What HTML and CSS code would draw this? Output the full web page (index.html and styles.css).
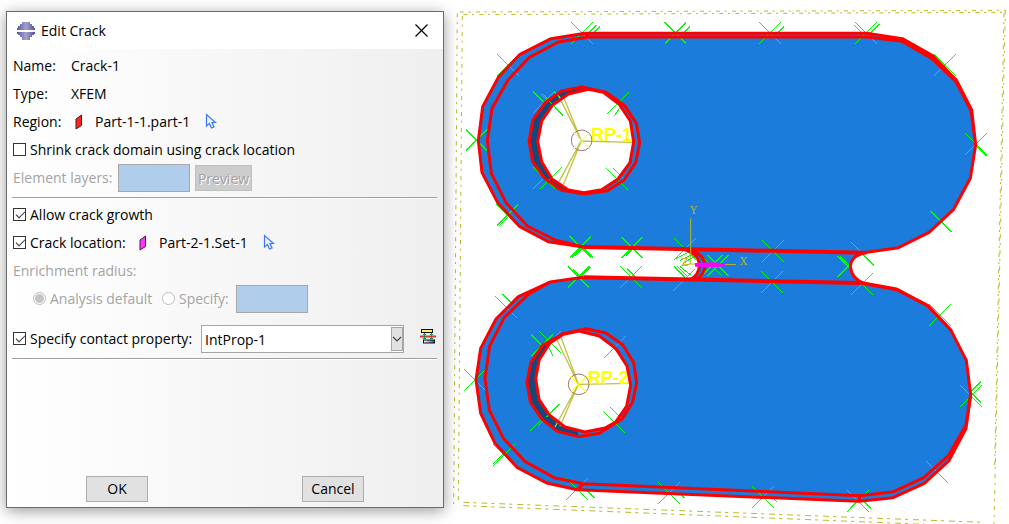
FILE: index.html
```html
<!DOCTYPE html>
<html lang="en">
<head>
<meta charset="utf-8">
<title>Edit Crack</title>
<link rel="stylesheet" href="styles.css">
</head>
<body>
<svg class="defs" aria-hidden="true">
  <defs>
    <linearGradient id="gem" x1="0" x2="1"><stop offset="0" stop-color="#5a5aa6"/><stop offset=".5" stop-color="#a3a3c8"/><stop offset="1" stop-color="#5050a0"/></linearGradient>
    <linearGradient id="steel" x1="0" x2="1"><stop offset="0" stop-color="#fff"/><stop offset="1" stop-color="#3c4ba8"/></linearGradient>
    <symbol id="pick" viewBox="0 0 12 16"><path d="M1.500 1.500V13L4.500 10.500L6.500 15L9 14L7 9.500H10.500Z" fill="#eef3ff" stroke="#3b78ff" stroke-width="1.200"/></symbol>
    <path id="b" d="M-32-32L32 32"/>
    <path id="s" d="M32-32L-32 32"/>
    <path id="x" d="M-32-32L32 32M32-32L-32 32"/>
  </defs>
</svg>
<div class="screen">
  <form class="dialog" aria-labelledby="dialog-title">
    <header class="titlebar">
      <svg class="app-icon" viewBox="0 0 18 18" shape-rendering="crispEdges"><path d="M5 0H13V2H15V4H17V6H18V8H0V6H1V4H3V2H5ZM0 10H18V12H17V13H15V15H13V18H5V15H3V13H1V12H0Z" fill="url(#gem)"/></svg>
      <h1 id="dialog-title">Edit Crack</h1>
      <button class="close" type="button" aria-label="Close"><svg viewBox="0 0 13 13"><path d="M.5.5L12.500 12.500M12.500.5L.5 12.500" stroke="#000" stroke-width="1.200"/></svg></button>
    </header>
    <div class="content">
      <div class="row"><span class="key">Name:</span><span>Crack-1</span></div>
      <div class="row"><span class="key">Type:</span><span>XFEM</span></div>
      <div class="row">
        <span class="key">Region:</span>
        <svg class="swatch" viewBox="0 0 8 16"><path d="M1 5L6.500 1V11.500L1 15Z" fill="#f22" stroke="#422" stroke-width="1"/></svg>
        <span class="target">Part-1-1.part-1</span>
        <button class="pick" type="button" aria-label="Pick region"><svg><use href="#pick"/></svg></button>
      </div>
      <div class="row"><label class="option"><input type="checkbox"> Shrink crack domain using crack location</label></div>
      <div class="row disabled">
        <label class="layers" for="layers">Element layers:</label>
        <input class="field" id="layers" type="text" disabled>
        <button class="preview" type="button" disabled>Preview</button>
      </div>
      <hr>
      <div class="row"><label class="option"><input type="checkbox" checked> Allow crack growth</label></div>
      <div class="row">
        <label class="option location"><input type="checkbox" checked> Crack location:</label>
        <svg class="swatch" viewBox="0 0 8 16"><path d="M1 5L6.500 1V11.500L1 15Z" fill="#f3f" stroke="#424" stroke-width="1"/></svg>
        <span class="target">Part-2-1.Set-1</span>
        <button class="pick" type="button" aria-label="Pick crack location"><svg><use href="#pick"/></svg></button>
      </div>
      <div class="row disabled">Enrichment radius:</div>
      <div class="row radius disabled">
        <label class="option analysis"><input type="radio" name="radius" checked disabled> Analysis default</label>
        <label class="option specify"><input type="radio" name="radius" disabled> Specify:</label>
        <input class="field" type="text" aria-label="Enrichment radius" disabled>
      </div>
      <div class="row contact">
        <label class="option property"><input type="checkbox" checked> Specify contact property:</label>
        <span class="combo">
          <select aria-label="Contact property"><option>IntProp-1</option></select>
          <svg class="arrow" viewBox="0 0 12 24"><rect x=".5" y=".5" width="11" height="23" fill="#e1e1e1" stroke="#a5a5a5"/><path d="M2 10L6 14L10 10" fill="none" stroke="#444" stroke-width="1.200"/></svg>
        </span>
        <button class="create" type="button" aria-label="Create interaction property"><svg viewBox="0 0 16 16"><rect x="1.500" y="1.500" width="11" height="3" fill="#ffe98a" stroke="#111"/><path d="M0 8.500H16" stroke="#d43a3a" stroke-width="2"/><path d="M4.500 5V11M11.500 5V11M3 6.500H6M10 6.500H13M3 10.500H6M10 10.500H13" stroke="#0a9a4a"/><rect x="3.500" y="12" width="11" height="3" fill="url(#steel)" stroke="#111"/></svg></button>
      </div>
      <hr>
      <footer class="actions"><button type="submit">OK</button><button type="button">Cancel</button></footer>
    </div>
  </form>

  <main class="viewport">
    <svg class="model" viewBox="0 0 1677 1572" preserveAspectRatio="xMinYMin meet" role="img" aria-label="Specimen model">
      <defs>
        <clipPath id="hole1"><path d="M415 268L460 277L508 313L541 363L548 425L540 488L504 537L455 569L402 578L355 570L306 537L275 485L263 425L275 363L308 315L355 282Z"/></clipPath>
        <clipPath id="hole2"><path d="M387 207L448 222L498 260L531 312L542 370L530 432L497 480L465 498L405 510L345 495L297 458L267 412L257 350L268 292L300 243L340 217Z"/></clipPath>
      </defs>

      <!-- datum planes -->
      <g class="datum">
        <path d="M30 36L1666 31M40 44L1664 37"/>
        <path d="M22 40L11 1516M37 48L25 1504"/>
        <path class="wide" d="M40 1507L1600 1567M40 1517L1500 1576"/>
        <path d="M1666 31L1632 1572M1662 40L1634 1400"/>
      </g>

      <!-- constraint marks behind the solid -->
      <g class="mark">
        <use href="#s" x="408" y="107"/><use href="#s" x="418" y="111"/><use href="#s" x="688" y="111"/>
        <use href="#s" x="183" y="202"/><use href="#s" x="180" y="645"/>
        <use href="#x" x="398" y="741"/><use href="#s" x="407" y="735"/><use href="#s" x="560" y="735"/>
        <use href="#s" x="970" y="111"/><use href="#s" x="1256" y="105"/><use href="#b" x="1244" y="107"/>
        <use href="#b" x="1577" y="436"/><use href="#s" x="1487" y="193"/><use href="#b" x="1240" y="764"/>
        <use href="#x" x="389" y="834"/><use href="#b" x="401" y="840"/><use href="#b" x="564" y="838"/>
        <use href="#b" x="190" y="915"/><use href="#s" x="162" y="1359"/>
        <use href="#b" x="402" y="1462"/><use href="#b" x="671" y="1462"/>
        <use href="#b" x="948" y="1473"/><use href="#x" x="1231" y="1494"/>
        <use href="#x" x="1561" y="1176"/><use href="#s" x="1470" y="945"/>
      </g>

      <!-- solid faces -->
      <path class="face" d="M405 100L303 116L210 163L146 230L98 320L85 422L96 518L143 608L208 679L295 725L400 741L706 750Q745 760 748 795Q748 824 722 838L400 832L300 846L205 890L138 957L92 1045L78 1140L92 1240L135 1330L201 1402L290 1449L382 1469L1227 1503L1329 1493L1423 1450L1497 1382L1548 1286L1562 1184L1549 1081L1503 991L1434 918L1340 869L1240 851Q1203 838 1201 800Q1205 764 1240 758L1345 743L1437 697L1511 628L1561 535L1577 434L1565 330L1519 240L1450 170L1357 116L1250 101Z"/>

      <!-- constraint marks in front -->
      <g class="mark">
        <use href="#x" x="396" y="99"/><use href="#x" x="676" y="99"/><use href="#x" x="960" y="99"/><use href="#x" x="1248" y="99"/>
        <use href="#x" x="174" y="195"/><use href="#x" x="80" y="420"/><use href="#x" x="172" y="645"/>
        <use href="#x" x="391" y="741"/><use href="#x" x="546" y="743"/><use href="#x" x="705" y="747"/><use href="#x" x="969" y="753"/><use href="#b" x="1235" y="758"/>
        <use href="#x" x="1485" y="195"/><use href="#x" x="1578" y="432"/><use href="#b" x="1473" y="665"/>
        <use href="#b" x="281" y="306"/><use href="#b" x="306" y="315"/><use href="#s" x="282" y="306"/>
        <use href="#s" x="504" y="309"/>
        <use href="#x" x="282" y="534"/><use href="#s" x="303" y="534"/><use href="#b" x="501" y="537"/>
        <use href="#x" x="386" y="831"/><use href="#x" x="543" y="831"/><use href="#s" x="702" y="840"/>
        <use href="#x" x="966" y="846"/><use href="#x" x="1236" y="852"/><use href="#x" x="1470" y="945"/>
        <use href="#b" x="168" y="921"/><use href="#x" x="75" y="1140"/><use href="#x" x="162" y="1365"/>
        <use href="#b" x="276" y="1036"/><use href="#x" x="300" y="1026"/><use href="#s" x="276" y="1036"/>
        <use href="#s" x="495" y="1041"/>
        <use href="#s" x="273" y="1260"/><use href="#x" x="296" y="1246"/><use href="#b" x="492" y="1266"/>
        <use href="#x" x="381" y="1467"/><use href="#x" x="657" y="1479"/><use href="#x" x="939" y="1491"/><use href="#x" x="1224" y="1503"/>
        <use href="#b" x="1461" y="1416"/><use href="#x" x="1563" y="1188"/>
        <use href="#x" x="785" y="797"/><use href="#x" x="804" y="797"/>
      </g>
      <g class="mark">
        <path d="M720 755L678 776M728 762L690 782M735 768L700 790M672 800L705 832M680 797L712 829M690 800L722 825M712 755L745 780"/>
        <path d="M1162 768L1202 808M1170 770L1202 800M1162 832L1204 790"/>
      </g>

      <!-- model edges -->
      <g class="edge">
        <path d="M405 100L303 116L210 163L146 230L98 320L85 422L96 518L143 608L208 679L295 725L400 741"/>
        <path d="M415 111L325 126L238 172L174 240L126 325L112 422L124 520L168 608L232 678L315 720L400 741"/>
        <path d="M405 100L415 111H1250L1357 124L1446 176L1517 244L1563 332L1577 434M405 100H1250L1357 116L1450 168L1519 240L1565 330L1577 434L1561 535L1511 628L1437 697L1345 743L1240 758"/>
        <path class="heavy" d="M400 741L1240 758M400 832L1230 849"/>
        <path d="M1250 758Q1203 764 1201 800Q1205 838 1245 851"/>
        <path d="M720 750Q765 765 765 797Q763 825 738 838M706 750Q745 760 748 795Q748 824 722 838"/>
        <path d="M400 832L300 846L205 890L138 957L92 1045L78 1140L92 1240L135 1330L201 1402L290 1449L382 1469L1227 1504L1329 1493L1423 1450L1497 1382L1548 1286L1562 1184L1549 1081L1503 991L1434 918L1340 869L1230 849"/>
        <path d="M300 846L235 883L163 952L119 1038L105 1135L118 1230L160 1315L226 1385L312 1433L400 1451L1230 1487L1331 1475L1421 1433L1495 1367L1548 1275L1562 1184M382 1469L400 1451M1230 1487L1227 1504"/>
        <path d="M1240 849L1340 867L1434 917L1505 993"/>
      </g>

      <!-- upper pin hole -->
      <g>
        <path class="wall" d="M402 582L333 570L283 534L248 485L237 422L249 360L285 308L335 273L395 261Z"/>
        <path class="void" d="M415 268L460 277L508 313L541 363L551 425L540 488L504 537L455 569L402 578L355 570L306 537L275 485L263 425L275 363L308 315L355 282Z"/>
        <g class="mark"><path d="M313 275L338 300M280 283L338 347M323 330L340 347M504 309L472 341M515 317L493 347M325 512L290 548M335 502L303 534M469 505L501 537M490 505L522 537"/></g>
        <path class="spoke" d="M394 422L327 290M394 422L342 295M394 422L327 545M394 422L340 554M394 423L548 427"/>
        <circle class="ref" cx="395" cy="421" r="31"/>
        <path class="refx" d="M370 397L420 446M420 397L370 446"/>
        <text class="rp" x="423" y="423" clip-path="url(#hole1)">RP-1</text>
        <g class="edge">
          <path d="M395 261L468 277L524 317L559 370L569 428L557 488L522 540L472 572L402 582L333 570L283 534L248 485L237 422L249 360L285 308L335 273Z"/>
          <path d="M415 268L460 277L508 313L541 363L551 425L540 488L504 537L455 569L402 578L355 570L306 537L275 485L263 425L275 363L308 315L355 282Z"/>
        </g>
      </g>

      <!-- lower pin hole -->
      <g transform="translate(0 786)">
        <path class="wall" d="M386 524L322 508L274 470L241 420L231 360L243 300L278 250L340 215Z"/>
        <path class="void" d="M387 207L448 222L498 260L531 312L542 370L530 432L497 480L465 498L405 510L345 495L297 458L267 412L257 350L268 292L300 243L340 217Z"/>
        <g class="mark"><path d="M268 208L332 272M295 255L308 281M495 255L463 287M480 248L508 275M328 427L290 465M460 448L492 480M481 436L513 468"/></g>
        <path class="spoke" d="M385 367L320 232M385 367L333 226M385 367L315 495M385 367L330 493M385 367L540 364"/>
        <circle class="ref" cx="386" cy="367" r="31"/>
        <path class="refx" d="M361 343L410 391M410 343L361 391"/>
        <text class="rp" x="413" y="367" clip-path="url(#hole2)">RP-2</text>
        <g class="edge">
          <path d="M408 200L468 213L518 248L551 302L560 362L548 420L517 470L448 514L386 524L322 508L274 470L241 420L231 360L243 300L278 250L340 215Z"/>
          <path d="M387 207L448 222L498 260L531 312L542 370L530 432L497 480L465 498L405 510L345 495L297 458L267 412L257 350L268 292L300 243L340 217Z"/>
        </g>
      </g>

      <!-- axes and crack -->
      <path class="axis" d="M722 655V792L700 795M722 792L858 794"/>
      <path d="M735 789L790 787L826 791V798L800 801L735 800Z" fill="#f0f"/>
      <text class="axis-name" x="720" y="642">Y</text>
      <text class="axis-name" x="869" y="795">X</text>
      <text class="axis-name" x="693" y="798">Z</text>
    </svg>
  </main>
</div>
</body>
</html>
```
FILE: styles.css
```css
* { box-sizing: border-box; }
body { margin: 0; background: #fff; color: #000; font: 14px/20px "Open Sans", "Noto Sans", sans-serif; }
button, input, select { font: inherit; color: inherit; margin: 0; padding: 0; }
.defs { position: absolute; width: 0; height: 0; }
.screen { display: flex; min-height: 100vh; }

.dialog { position: relative; display: flex; flex-direction: column; flex: none; width: 438px; margin: 11px 0 16px 6px; border: 1px solid #6b6b6b; background: #fff; box-shadow: 0 3px 14px rgba(0, 0, 0, .4); }
.titlebar { display: flex; align-items: center; height: 37px; padding: 0 15px 0 10px; }
.app-icon { width: 18px; height: 18px; }
h1 { flex: 1; margin: 0 0 0 6px; font-size: 14px; font-weight: 400; }
.close { display: flex; width: 13px; height: 13px; border: 0; background: none; }
.close svg { width: 13px; height: 13px; }

.content { display: flex; flex: 1; flex-direction: column; padding: 3px 6px 5px; background: linear-gradient(90deg, #fff, #efefef); }
.row { display: flex; align-items: center; height: 28px; white-space: nowrap; }
.key { width: 58px; }
.swatch { width: 8px; height: 16px; margin: 0 12px 0 4px; }
.target { margin-right: 15px; }
.pick, .create { display: flex; border: 0; background: none; }
.pick { margin-bottom: 3px; }
.pick svg { width: 12px; height: 16px; }
.create { margin-left: 16px; margin-bottom: 6px; }
.create svg { width: 16px; height: 16px; }
.disabled, .disabled button { color: #a3a3a3; text-shadow: 1px 1px #fff; }
hr { width: auto; height: 2px; margin: 5px 0 2px -1px; border: 0; border-top: 1px solid #a0a0a0; background: #fff; }

.option { display: flex; align-items: center; gap: 4px; }
.option input { flex: none; width: 13px; height: 13px; margin-bottom: 2px; border: 1px solid #333; background: #fff; appearance: none; }
.option input[type="checkbox"]:checked::after { content: ""; display: block; width: 8px; height: 4px; margin: 2px 0 0 2px; border: solid #333; border-width: 0 0 1px 1px; transform: rotate(-45deg); }
.option input[type="radio"] { border-color: #bcbcbc; border-radius: 50%; }
.option input[type="radio"]:checked::after { content: ""; display: block; width: 9px; height: 9px; margin: 1px; border-radius: 50%; background: #c4c4c4; }

.field { width: 72px; height: 28px; border: 1px solid #a8a8a8; border-radius: 0; background: #b0cdeb; }
.layers { width: 105px; }
.preview { width: 57px; height: 26px; margin-left: 5px; padding-top: 2px; border: 1px solid #bfbfbf; background: #ccc; }
.location { width: 122px; }
.radius { padding-left: 20px; }
.analysis { width: 129px; }
.specify { width: 74px; }
.contact { margin-top: 12px; }
.property { width: 188px; }
.combo { position: relative; width: 203px; height: 28px; }
.combo select { width: 100%; height: 100%; padding: 2px 0 0 3px; border: 1px solid #a5a5a5; border-radius: 0; background: #fff; appearance: none; }
.arrow { position: absolute; top: 2px; right: 1px; width: 12px; height: 24px; pointer-events: none; }
.actions { display: flex; gap: 154px; margin-top: auto; padding-left: 73px; }
.actions button { width: 62px; height: 26px; border: 1px solid #adadad; background: #e1e1e1; }

.viewport { flex: 1; min-width: 0; margin-left: 6px; }
.model { display: block; width: 100%; height: auto; }
.datum { fill: none; stroke: #bdbb22; stroke-width: 3; stroke-dasharray: 12 14 6 16; }
.datum .wide { stroke-dasharray: 18 12 9 15; }
.mark { fill: none; stroke: #0f0; stroke-width: 3; shape-rendering: crispEdges; }
.face { fill: #1b7cdb; }
.wall { fill: #11497f; }
.void { fill: #fff; }
.edge { fill: none; stroke: #f00; stroke-width: 9; stroke-linejoin: round; }
.edge .heavy { stroke-width: 12; }
.spoke { fill: none; stroke: #c4c244; stroke-width: 4; }
.ref { fill: none; stroke: #a07078; stroke-width: 3; }
.refx { stroke: #ff0; stroke-width: 3; }
.rp { fill: #ff0; font: bold 54px "Liberation Sans", sans-serif; }
.axis { fill: none; stroke: #b9b61a; stroke-width: 3; }
.axis-name { fill: #b9b61a; font: 32px "DejaVu Serif", serif; }
```
